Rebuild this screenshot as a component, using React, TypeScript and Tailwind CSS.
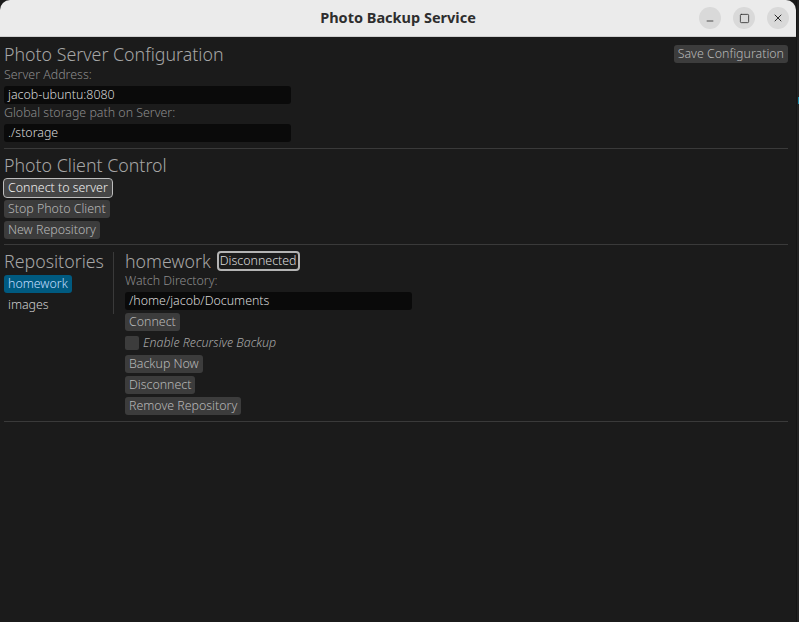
import { Minus, Square, X } from "lucide-react";

const font = { fontFamily: '"Noto Sans", "Open Sans", sans-serif' };

function Btn({ label, focused = false }: { label: string; focused?: boolean }) {
  return (
    <div
      className={`self-start h-[18px] flex items-center rounded-[3px] px-[4px] text-[12.4px] leading-none ${
        focused
          ? "bg-[#464646] text-[#f0f0f0] outline outline-1 outline-[#bdbdbd]"
          : "bg-[#3c3c3c] text-[#b8b8b8]"
      }`}
    >
      {label}
    </div>
  );
}

function Label({ text, className = "" }: { text: string; className?: string }) {
  return (
    <div className={`h-[18px] flex items-center text-[12.4px] leading-none text-[#8c8c8c] ${className}`}>
      {text}
    </div>
  );
}

function Field({ value, width }: { value: string; width: string }) {
  return (
    <div className={`${width} mt-[2px] h-[18px] flex items-center rounded-[3px] bg-[#0a0a0a] px-[4px] text-[12.4px] leading-none text-[#d8d8d8]`}>
      {value}
    </div>
  );
}

function Heading({ text }: { text: string }) {
  return (
    <div className="h-[22px] pt-[2px] flex items-center text-[17.8px] leading-none text-[#a6a6a6]">{text}</div>
  );
}

function Separator({ className = "" }: { className?: string }) {
  return <div className={`h-px bg-[#3a3a3a] ${className}`} />;
}

export default function App() {
  return (
    <div className="w-[799px] h-[622px] bg-[#1b1b1b] flex overflow-hidden font-light" style={font}>
      <div className="flex-1 flex flex-col">
        {/* title bar */}
        <div className="h-[37px] shrink-0 bg-[#ebebeb] border-b border-[#cfcfcf] rounded-t-[10px] relative flex items-center justify-center">
          <span className="text-[14.5px] font-bold text-[#2e2e2e]">Photo Backup Service</span>
          <div className="absolute right-[7px] top-[7px] flex gap-[12px]">
            <div className="w-[22px] h-[22px] rounded-full bg-[#d9d9d9] flex items-center justify-center">
              <Minus className="w-[10px] h-[10px] mt-[5px] text-[#2e2e2e]" strokeWidth={2} />
            </div>
            <div className="w-[22px] h-[22px] rounded-full bg-[#d9d9d9] flex items-center justify-center">
              <Square className="w-[11px] h-[11px] text-[#2e2e2e]" strokeWidth={1.8} />
            </div>
            <div className="w-[22px] h-[22px] rounded-full bg-[#d9d9d9] flex items-center justify-center">
              <X className="w-[12px] h-[12px] text-[#2e2e2e]" strokeWidth={2} />
            </div>
          </div>
        </div>

        {/* content */}
        <div className="flex flex-col pl-[4px] pr-[8px]">
          <div className="mt-[6px] flex items-start justify-between">
            <Heading text="Photo Server Configuration" />
            <div className="mt-[2px] h-[18px] flex items-center rounded-[3px] bg-[#3c3c3c] px-[4px] text-[12.4px] leading-none text-[#b8b8b8]">
              Save Configuration
            </div>
          </div>
          <Label text="Server Address:" className="mt-px" />
          <Field value="jacob-ubuntu:8080" width="w-[287px]" />
          <Label text="Global storage path on Server:" />
          <Field value="./storage" width="w-[287px]" />
          <Separator className="mt-[6px]" />

          <div className="mt-[5px]">
            <Heading text="Photo Client Control" />
          </div>
          <div className="mt-[3px] flex flex-col gap-[3px]">
            <Btn label="Connect to server" focused />
            <Btn label="Stop Photo Client" />
            <Btn label="New Repository" />
          </div>
          <Separator className="mt-[5px]" />

          <div className="mt-[5px] flex">
            <div className="w-[105px] flex flex-col">
              <Heading text="Repositories" />
              <div className="mt-[3px] self-start h-[18px] flex items-center rounded-[3px] bg-[#005a80] px-[4px] text-[12.4px] leading-none text-[#c0deff]">
                homework
              </div>
              <div className="mt-[3px] h-[18px] flex items-center px-[4px] text-[12.4px] leading-none text-[#cfcfcf]">
                images
              </div>
            </div>
            <div className="ml-[4px] mt-[2px] w-px h-[62px] bg-[#3a3a3a]" />
            <div className="ml-[11px] flex flex-col">
              <div className="flex items-center gap-[6px]">
                <Heading text="homework" />
                <div className="h-[20px] flex items-center rounded-[4px] border-2 border-[#b4b4b4] px-[1px] text-[12.4px] leading-none text-[#dcdcdc]">
                  Disconnected
                </div>
              </div>
              <Label text="Watch Directory:" />
              <Field value="/home/jacob/Documents" width="w-[287px]" />
              <div className="mt-[3px] flex flex-col gap-[3px]">
                <Btn label="Connect" />
                <div className="h-[18px] flex items-center gap-[4px]">
                  <div className="w-[14px] h-[14px] rounded-[2px] bg-[#3c3c3c]" />
                  <span className="text-[12.4px] italic leading-none text-[#a8a8a8]">Enable Recursive Backup</span>
                </div>
                <Btn label="Backup Now" />
                <Btn label="Disconnect" />
                <Btn label="Remove Repository" />
              </div>
            </div>
          </div>
          <Separator className="mt-[6px]" />
        </div>
      </div>
      <div className="w-[3px] shrink-0 bg-[#222222] border-l border-[#151515] relative">
        <div className="absolute left-[1px] top-[97px] w-[2px] h-[7px] bg-[#1a8aa8]" />
      </div>
    </div>
  );
}
